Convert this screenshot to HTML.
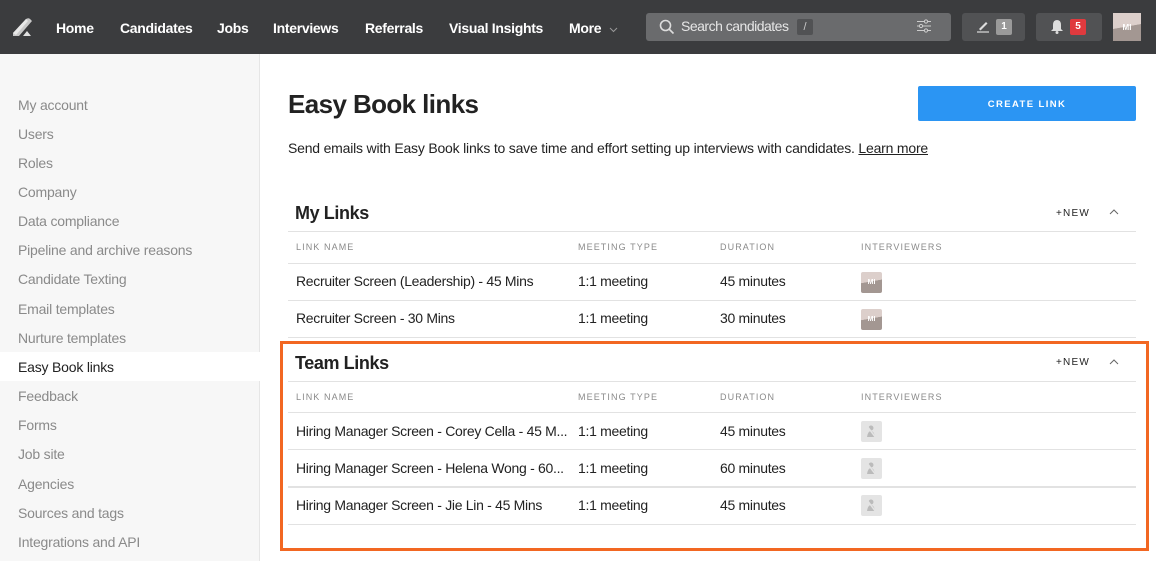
<!DOCTYPE html>
<html><head><meta charset="utf-8"><style>
*{box-sizing:border-box;margin:0;padding:0}
body{width:1156px;height:561px;overflow:hidden;background:#fff;font-family:"Liberation Sans",sans-serif;color:#222;position:relative}
.hdr{position:absolute;left:0;top:0;width:1156px;height:54px;background:#3b3c3e}
.nav{position:absolute;top:20px;color:#fff;font-weight:bold;font-size:14px;letter-spacing:-0.3px}
.search{position:absolute;left:646px;top:13px;width:305px;height:28px;background:#6a6b6d;border-radius:3px}
.btnbox{position:absolute;top:13px;height:28px;background:#515254;border-radius:3px}
.side{position:absolute;left:0;top:54px;width:260px;height:507px;background:#f7f7f7;border-right:1px solid #e6e6e6}
.si{position:absolute;left:18px;font-size:14px;color:#8a8a8a;letter-spacing:-0.2px}
.act{position:absolute;left:0;top:352px;width:260px;height:29px;background:#fff}
.abs{position:absolute}
.line{position:absolute;left:288px;width:848px;height:1px;background:#e2e2e2}
.th{position:absolute;font-size:9px;letter-spacing:1.1px;color:#8a8a8a}
.td{position:absolute;font-size:14px;color:#222;letter-spacing:-0.3px}
.h2{position:absolute;left:295px;font-size:18px;font-weight:bold;color:#222;letter-spacing:-0.4px}
.new{position:absolute;left:1056px;font-size:10px;letter-spacing:1.2px;color:#222}
.car{position:absolute;left:1109px}
.av{position:absolute;left:861px;width:21px;height:21px;border-radius:2px;background:linear-gradient(170deg,#dccfcb 0 45%,#a39792 46%);color:#fff;font-size:7px;font-weight:bold;text-align:center;line-height:22px}
.ph{position:absolute;left:861px;width:21px;height:21px;border-radius:2px;background:#e4e4e4}
</style></head><body>
<div class="hdr"></div>
<svg class="abs" style="left:12px;top:16px" width="24" height="24" viewBox="0 0 24 24"><path d="M1 17 L14 3 Q17 1 19 4 L20 5 L7 20 L1 20Z" fill="#c8c8c8"/><path d="M1 17 L14 3 L16 5 L4 19Z" fill="#e8e8e8"/><path d="M15 15 L19 20 L11 20Z" fill="#e0e0e0"/></svg>
<div class="nav" style="left:56px">Home</div>
<div class="nav" style="left:120px">Candidates</div>
<div class="nav" style="left:217px">Jobs</div>
<div class="nav" style="left:273px">Interviews</div>
<div class="nav" style="left:365px">Referrals</div>
<div class="nav" style="left:449px">Visual Insights</div>
<div class="nav" style="left:569px">More</div>
<svg class="abs" style="left:609px;top:27px" width="9" height="6" viewBox="0 0 9 6"><path d="M1 1 L4.5 4.5 L8 1" fill="none" stroke="#999" stroke-width="1"/></svg>
<div class="search"></div>
<svg class="abs" style="left:659px;top:19px" width="16" height="16" viewBox="0 0 16 16"><circle cx="6.5" cy="6.5" r="5" fill="none" stroke="#ddd" stroke-width="1.6"/><path d="M10 10 L14.5 14.5" stroke="#ddd" stroke-width="1.6"/></svg>
<div class="abs" style="left:681px;top:18px;font-size:14px;color:#e6e6e6;letter-spacing:-0.5px">Search candidates</div>
<div class="abs" style="left:797px;top:19px;width:16px;height:16px;background:#515254;border-radius:2px;color:#ccc;font-size:11px;text-align:center;line-height:16px">/</div>
<svg class="abs" style="left:916px;top:19px" width="16" height="14" viewBox="0 0 16 14"><g stroke="#ccc" stroke-width="1" fill="#6a6b6d"><path d="M1 2.5H15M1 7H15M1 11.5H15"/><circle cx="10" cy="2.5" r="1.6"/><circle cx="5" cy="7" r="1.6"/><circle cx="10" cy="11.5" r="1.6"/></g></svg>
<div class="btnbox" style="left:962px;width:63px"></div>
<svg class="abs" style="left:976px;top:19px" width="14" height="14" viewBox="0 0 14 14"><path d="M3 10 L10 3 L11.5 4.5 L4.5 11.5Z" fill="#ddd"/><path d="M1 13H13" stroke="#ddd" stroke-width="1.2"/></svg>
<div class="abs" style="left:996px;top:19px;width:16px;height:16px;background:#9a9a9a;border-radius:2px;color:#fff;font-size:10px;font-weight:bold;text-align:center;line-height:16px">1</div>
<div class="btnbox" style="left:1036px;width:66px"></div>
<svg class="abs" style="left:1050px;top:19px" width="14" height="16" viewBox="0 0 14 16"><path d="M7 1 Q11 1 11 6 L11 10 L13 12 L1 12 L3 10 L3 6 Q3 1 7 1Z" fill="#ddd"/><circle cx="7" cy="13.5" r="1.5" fill="#ddd"/></svg>
<div class="abs" style="left:1070px;top:19px;width:16px;height:16px;background:#e03a3e;border-radius:2px;color:#fff;font-size:10px;font-weight:bold;text-align:center;line-height:16px">5</div>
<div class="abs" style="left:1113px;top:13px;width:28px;height:28px;background:linear-gradient(170deg,#dccfcb 0 48%,#a39792 49%);color:#fff;font-size:8px;font-weight:bold;text-align:center;line-height:29px">MI</div>

<div class="side"></div>
<div class="act"></div>
<div class="si" style="top:97px">My account</div>
<div class="si" style="top:126px">Users</div>
<div class="si" style="top:155px">Roles</div>
<div class="si" style="top:184px">Company</div>
<div class="si" style="top:213px">Data compliance</div>
<div class="si" style="top:242px">Pipeline and archive reasons</div>
<div class="si" style="top:271px">Candidate Texting</div>
<div class="si" style="top:301px">Email templates</div>
<div class="si" style="top:330px">Nurture templates</div>
<div class="si" style="top:359px;color:#222">Easy Book links</div>
<div class="si" style="top:388px">Feedback</div>
<div class="si" style="top:417px">Forms</div>
<div class="si" style="top:446px">Job site</div>
<div class="si" style="top:476px">Agencies</div>
<div class="si" style="top:505px">Sources and tags</div>
<div class="si" style="top:534px">Integrations and API</div>

<div class="abs" style="left:288px;top:89px;font-size:26px;font-weight:bold;color:#222;letter-spacing:-0.6px">Easy Book links</div>
<div class="abs" style="left:918px;top:86px;width:218px;height:35px;background:#2b95f3;border-radius:2px;color:#fff;font-size:9.5px;font-weight:bold;letter-spacing:1.4px;text-align:center;line-height:37px">CREATE LINK</div>
<div class="abs" style="left:288px;top:140px;font-size:14px;color:#222;letter-spacing:-0.2px">Send emails with Easy Book links to save time and effort setting up interviews with candidates. <span style="text-decoration:underline">Learn more</span></div>

<div class="h2" style="top:203px">My Links</div>
<div class="new" style="top:208px">+NEW</div>
<svg class="car" style="top:209px" width="10" height="6" viewBox="0 0 10 6"><path d="M1 5 L5 1 L9 5" fill="none" stroke="#666" stroke-width="1"/></svg>
<div class="line" style="top:231px"></div>
<div class="th" style="left:296px;top:242px">LINK NAME</div>
<div class="th" style="left:578px;top:242px">MEETING TYPE</div>
<div class="th" style="left:720px;top:242px">DURATION</div>
<div class="th" style="left:861px;top:242px">INTERVIEWERS</div>
<div class="line" style="top:263px"></div>
<div class="td" style="left:296px;top:273px">Recruiter Screen (Leadership) - 45 Mins</div>
<div class="td" style="left:578px;top:273px">1:1 meeting</div>
<div class="td" style="left:720px;top:273px">45 minutes</div>
<div class="av" style="top:272px">MI</div>
<div class="line" style="top:300px"></div>
<div class="td" style="left:296px;top:310px">Recruiter Screen - 30 Mins</div>
<div class="td" style="left:578px;top:310px">1:1 meeting</div>
<div class="td" style="left:720px;top:310px">30 minutes</div>
<div class="av" style="top:309px">MI</div>
<div class="line" style="top:337px"></div>

<div class="abs" style="left:280px;top:341px;width:869px;height:210px;border:3px solid #f26722"></div>
<div class="h2" style="top:353px">Team Links</div>
<div class="new" style="top:357px">+NEW</div>
<svg class="car" style="top:359px" width="10" height="6" viewBox="0 0 10 6"><path d="M1 5 L5 1 L9 5" fill="none" stroke="#666" stroke-width="1"/></svg>
<div class="line" style="top:381px"></div>
<div class="th" style="left:296px;top:392px">LINK NAME</div>
<div class="th" style="left:578px;top:392px">MEETING TYPE</div>
<div class="th" style="left:720px;top:392px">DURATION</div>
<div class="th" style="left:861px;top:392px">INTERVIEWERS</div>
<div class="line" style="top:412px"></div>
<div class="td" style="left:296px;top:423px">Hiring Manager Screen - Corey Cella - 45 M...</div>
<div class="td" style="left:578px;top:423px">1:1 meeting</div>
<div class="td" style="left:720px;top:423px">45 minutes</div>
<div class="ph" style="top:421px"><svg width="21" height="21" viewBox="0 0 21 21"><circle cx="10" cy="7" r="2.5" fill="#bbb"/><path d="M6 16 Q7 10 10 10 Q13 10 14 16Z" fill="#bbb"/><path d="M6 5 L15 17" stroke="#e4e4e4" stroke-width="1.5"/></svg></div>
<div class="line" style="top:449px"></div>
<div class="td" style="left:296px;top:460px">Hiring Manager Screen - Helena Wong - 60...</div>
<div class="td" style="left:578px;top:460px">1:1 meeting</div>
<div class="td" style="left:720px;top:460px">60 minutes</div>
<div class="ph" style="top:458px"><svg width="21" height="21" viewBox="0 0 21 21"><circle cx="10" cy="7" r="2.5" fill="#bbb"/><path d="M6 16 Q7 10 10 10 Q13 10 14 16Z" fill="#bbb"/><path d="M6 5 L15 17" stroke="#e4e4e4" stroke-width="1.5"/></svg></div>
<div class="line" style="top:486px;height:2px"></div>
<div class="td" style="left:296px;top:497px">Hiring Manager Screen - Jie Lin - 45 Mins</div>
<div class="td" style="left:578px;top:497px">1:1 meeting</div>
<div class="td" style="left:720px;top:497px">45 minutes</div>
<div class="ph" style="top:495px"><svg width="21" height="21" viewBox="0 0 21 21"><circle cx="10" cy="7" r="2.5" fill="#bbb"/><path d="M6 16 Q7 10 10 10 Q13 10 14 16Z" fill="#bbb"/><path d="M6 5 L15 17" stroke="#e4e4e4" stroke-width="1.5"/></svg></div>
<div class="line" style="top:524px"></div>
</body></html>
